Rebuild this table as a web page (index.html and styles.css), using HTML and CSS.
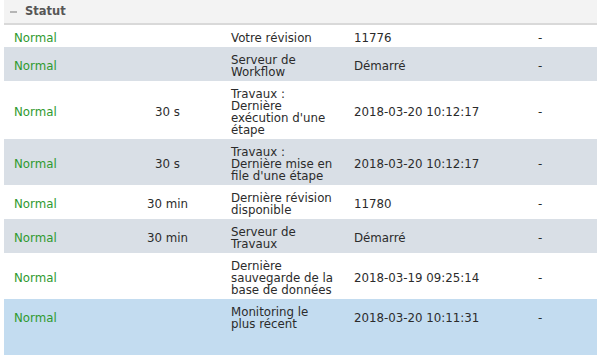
FILE: index.html
```html
<!DOCTYPE html>
<html lang="fr">
<head>
<meta charset="utf-8">
<title>Statut</title>
<link rel="stylesheet" href="styles.css">
</head>
<body>
<div class="panel">
  <div class="panel-head">
    <span class="toggle"></span>
    <span class="title">Statut</span>
  </div>
  <table class="status">
    <colgroup>
      <col class="c1"><col class="c2"><col class="c3"><col class="c4"><col class="c5">
    </colgroup>
    <tbody>
      <tr class="odd"><td class="ok">Normal</td><td class="num"></td><td class="lbl">Votre révision</td><td>11776</td><td>-</td></tr>
      <tr class="even"><td class="ok">Normal</td><td class="num"></td><td class="lbl">Serveur de Workflow</td><td>Démarré</td><td>-</td></tr>
      <tr class="odd"><td class="ok">Normal</td><td class="num">30 s</td><td class="lbl">Travaux : Dernière exécution d'une étape</td><td>2018-03-20 10:12:17</td><td>-</td></tr>
      <tr class="even"><td class="ok">Normal</td><td class="num">30 s</td><td class="lbl">Travaux : Dernière mise en file d'une étape</td><td>2018-03-20 10:12:17</td><td>-</td></tr>
      <tr class="odd"><td class="ok">Normal</td><td class="num">30 min</td><td class="lbl">Dernière révision disponible</td><td>11780</td><td>-</td></tr>
      <tr class="even"><td class="ok">Normal</td><td class="num">30 min</td><td class="lbl">Serveur de Travaux</td><td>Démarré</td><td>-</td></tr>
      <tr class="odd"><td class="ok">Normal</td><td class="num"></td><td class="lbl">Dernière sauvegarde de la base de données</td><td>2018-03-19 09:25:14</td><td>-</td></tr>
      <tr class="sel"><td class="ok">Normal</td><td class="num"></td><td class="lbl">Monitoring le plus récent</td><td>2018-03-20 10:11:31</td><td>-</td></tr>
    </tbody>
  </table>
</div>
</body>
</html>
```
FILE: styles.css
```css
html, body {
  margin: 0;
  padding: 0;
  background: #ffffff;
}
body {
  font-family: "DejaVu Sans", Verdana, sans-serif;
  font-size: 11.8px;
  color: #2b2b2b;
}
.panel {
  margin: 0 3px 0 4px;
}
.panel-head {
  height: 23px;
  background: #f3f3f3;
  border-bottom: 2px solid #d9d9d9;
  display: flex;
  align-items: center;
  gap: 8px;
  padding-left: 6px;
  box-sizing: content-box;
}
.toggle {
  width: 7px;
  height: 2px;
  background: #b5b5b5;
}
.title {
  font-weight: bold;
  font-size: 11.5px;
  color: #565656;
  margin-top: -1px;
}
.status {
  width: 100%;
  border-collapse: collapse;
  table-layout: fixed;
  line-height: 12px;
}
.c1 { width: 110px; }
.c2 { width: 107px; }
.c3 { width: 123px; }
.c4 { width: 184px; }
.c5 { width: auto; }
.status td {
  padding: 7px 10px 3px;
  vertical-align: middle;
  text-align: left;
}
.status td.lbl {
  padding-right: 9px;
}
.status td.num {
  text-align: center;
}
.status td.ok {
  color: #2f9a2f;
}
.odd td { background: #ffffff; }
.even td { background: #d9dfe6; }
.sel td {
  background: #c3dcf0;
  padding-top: 7px;
  padding-bottom: 29px;
}
```
